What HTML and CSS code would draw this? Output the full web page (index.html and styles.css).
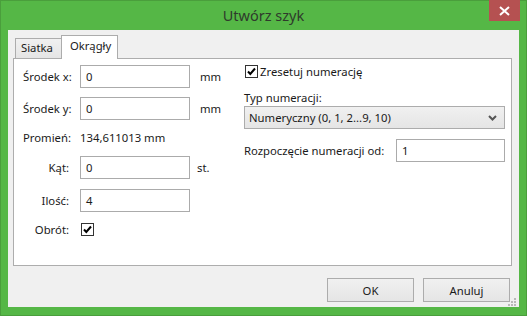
FILE: index.html
```html
<!DOCTYPE html>
<html lang="pl">
<head>
<meta charset="utf-8">
<title>Utwórz szyk</title>
<link rel="stylesheet" href="styles.css">
</head>
<body>
<div class="window">
  <div class="titlebar">
    <span class="title">Utwórz szyk</span>
    <div class="close"><svg width="11" height="10" viewBox="0 0 11 10"><path d="M1 1 L10 9 M10 1 L1 9" stroke="#fff" stroke-width="2" fill="none"/></svg></div>
  </div>
  <div class="client">
    <div class="tabs">
      <div class="tab">Siatka</div>
      <div class="tab active">Okrągły</div>
    </div>
    <div class="pane">
      <div class="col-left">
        <div class="row r1"><span class="lbl">Środek x:</span><div class="input">0</div><span class="unit mm">mm</span></div>
        <div class="row r2"><span class="lbl">Środek y:</span><div class="input">0</div><span class="unit mm">mm</span></div>
        <div class="row r3"><span class="lbl">Promień:</span><span class="value">134,611013 mm</span></div>
        <div class="row r4"><span class="lbl">Kąt:</span><div class="input">0</div><span class="unit">st.</span></div>
        <div class="row r5"><span class="lbl">Ilość:</span><div class="input">4</div></div>
        <div class="row r6"><span class="lbl">Obrót:</span><span class="check"><svg width="13" height="13" viewBox="0 0 13 13"><path d="M3 6.5 L5.3 9 L10 3.5" stroke="#000" stroke-width="2" fill="none"/></svg></span></div>
      </div>
      <div class="col-right">
        <div class="check-row"><span class="check"><svg width="13" height="13" viewBox="0 0 13 13"><path d="M3 6.5 L5.3 9 L10 3.5" stroke="#000" stroke-width="2" fill="none"/></svg></span><span class="check-lbl">Zresetuj numerację</span></div>
        <div class="typ-lbl">Typ numeracji:</div>
        <div class="select"><span>Numeryczny (0, 1, 2...9, 10)</span><svg width="9" height="6" viewBox="0 0 9 6"><path d="M1 1 L4.5 4.5 L8 1" stroke="#555" stroke-width="2" fill="none"/></svg></div>
        <div class="start-row"><span>Rozpoczęcie numeracji od:</span><div class="input short">1</div></div>
      </div>
    </div>
    <div class="buttons">
      <div class="btn">OK</div>
      <div class="btn">Anuluj</div>
    </div>
    <svg class="grip" width="8" height="8" viewBox="0 0 8 8"><g fill="#b8b8b8"><rect x="6" y="0" width="2" height="2"/><rect x="3" y="3" width="2" height="2"/><rect x="6" y="3" width="2" height="2"/><rect x="0" y="6" width="2" height="2"/><rect x="3" y="6" width="2" height="2"/><rect x="6" y="6" width="2" height="2"/></g></svg>
  </div>
</div>
</body>
</html>
```

FILE: styles.css
```css
* { box-sizing: border-box; }
html, body { margin: 0; padding: 0; }
body {
  font-family: "Noto Sans", "Open Sans", sans-serif;
  font-size: 11.3px;
  color: #1a1a1a;
  background: #fff;
}
.window {
  width: 527px;
  height: 316px;
  background: #55b746;
  border: 1px solid #4a9e3c;
  display: flex;
  flex-direction: column;
}
.titlebar {
  position: relative;
  height: 29px;
  display: flex;
  align-items: center;
  justify-content: center;
}
.title {
  font-size: 14.5px;
  color: #2f3a2c;
  margin-top: -1px;
}
.close {
  position: absolute;
  top: -1px;
  right: 6px;
  width: 31px;
  height: 21px;
  background: #b55151;
  display: flex;
  align-items: center;
  justify-content: center;
}
.client {
  position: relative;
  flex: 1;
  margin: 0 7px 8px 7px;
  background: #f0f0f0;
  padding: 5px 7px 0 5px;
  display: flex;
  flex-direction: column;
}
.tabs {
  height: 23px;
  display: flex;
  align-items: flex-end;
  padding-left: 2px;
}
.tab {
  height: 20px;
  padding: 0 0 0 5px;
  width: 47px;
  border: 1px solid #acacac;
  border-bottom: none;
  background: linear-gradient(#f0f0f0, #e5e5e5);
  line-height: 18px;
}
.tab.active {
  position: relative;
  z-index: 1;
  width: 57px;
  height: 24px;
  margin-left: -1px;
  margin-bottom: -1px;
  background: #fff;
  padding-left: 8px;
  line-height: 20px;
}
.pane {
  height: 208px;
  background: #fff;
  border: 1px solid #adadad;
  padding: 6px 0 0 9px;
  display: flex;
}
.col-left {
  width: 221px;
  display: flex;
  flex-direction: column;
}
.row {
  display: flex;
  align-items: center;
  height: 23px;
}
.r2 { margin-top: 9px; }
.r3 { margin-top: 6px; }
.r4 { margin-top: 7px; }
.r5 { margin-top: 10px; }
.r6 { margin-top: 10px; height: 15px; }
.lbl {
  width: 46px;
  text-align: right;
  white-space: nowrap;
  margin-right: 11px;
}
.input {
  height: 23px;
  width: 110px;
  border: 1px solid #ababab;
  background: #fff;
  padding-left: 5px;
  line-height: 21px;
}
.input.short { width: 109px; }
.unit { margin-left: 7px; }
.unit.mm { margin-left: 10px; }
.value { white-space: nowrap; }
.check {
  width: 13px;
  height: 13px;
  border: 1px solid #333;
  background: #fff;
  display: flex;
  align-items: center;
  justify-content: center;
}
.check svg { display: block; margin: -1px; }
.r6 .check { margin-left: 1px; }
.col-right {
  width: 261px;
  display: flex;
  flex-direction: column;
}
.check-row {
  display: flex;
  align-items: center;
  height: 13px;
  padding-left: 1px;
}
.check-lbl { margin-left: 2px; }
.typ-lbl {
  margin-top: 12px;
  height: 16px;
  line-height: 16px;
}
.select {
  height: 23px;
  border: 1px solid #acacac;
  background: linear-gradient(#f0f0f0, #e5e5e5);
  display: flex;
  align-items: center;
  justify-content: space-between;
  padding: 0 7px 0 4px;
}
.start-row {
  margin-top: 10px;
  display: flex;
  align-items: center;
  justify-content: space-between;
}
.buttons {
  margin-top: 12px;
  display: flex;
  justify-content: flex-end;
  gap: 9px;
  padding-right: 2px;
}
.btn {
  width: 87px;
  height: 24px;
  border: 1px solid #acacac;
  background: linear-gradient(#f0f0f0, #e5e5e5);
  display: flex;
  align-items: center;
  justify-content: center;
}
.grip {
  position: absolute;
  right: 3px;
  bottom: 1px;
}
```
